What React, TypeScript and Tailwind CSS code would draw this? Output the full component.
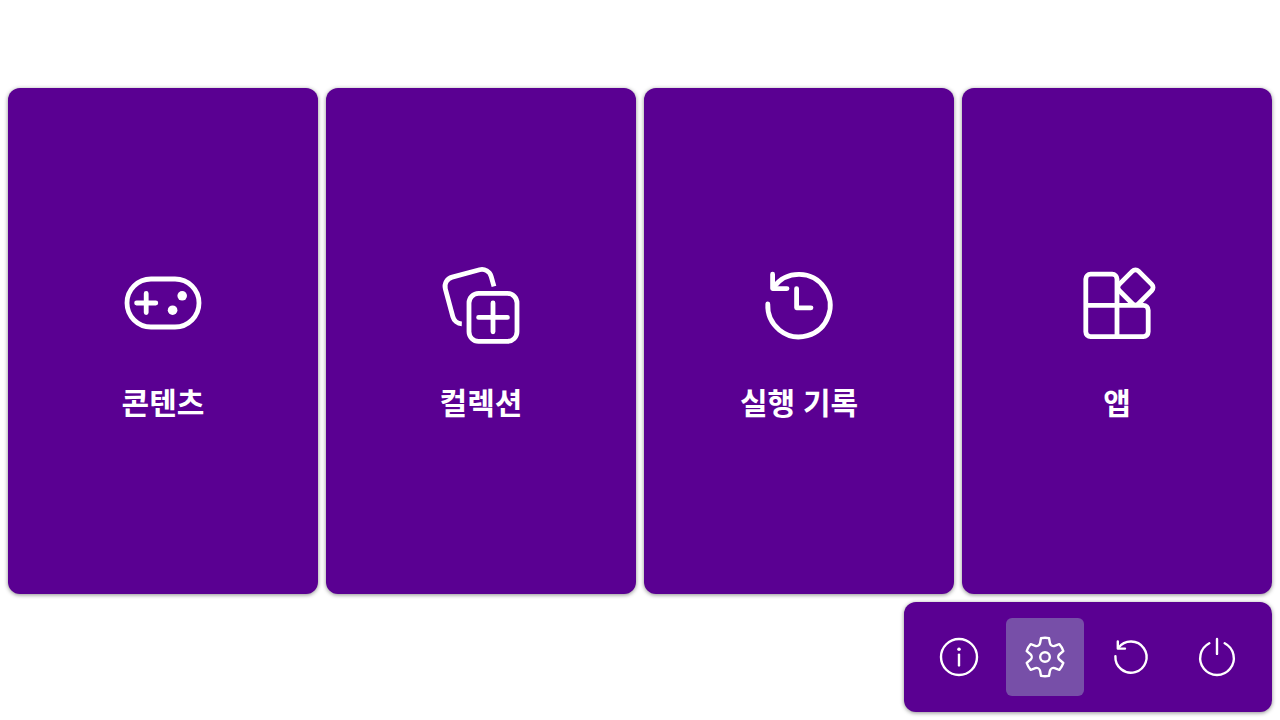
import type { ReactNode } from "react";

type Item = { label: string; icon: ReactNode };

const ControllerIcon = (
  <>
    <rect x="2.5" y="5" width="15" height="10" rx="5" />
    <path d="M6.5 8v4M4.5 10h4" />
    <g fill="currentColor" stroke="none">
      <circle cx="14" cy="8.5" r="1" />
      <circle cx="12" cy="11.5" r="1" />
    </g>
  </>
);

const CollectionIcon = (
  <>
    <rect x="7.5" y="8" width="10" height="10" rx="2" />
    <path d="M12.5 10v6M9.5 13h6" />
    <path
      strokeLinecap="butt"
      d="M12.7 6.55 12.13 4.5A2 2 0 0 0 9.7 3.07L4 4.6A2 2 0 0 0 2.57 7.05L4.13 12.85A2 2 0 0 0 6 14.33"
    />
  </>
);

const HistoryIcon = (
  <>
    <path d="M3.5 10.2A6.5 6.5 0 1 0 4.75 6.7" />
    <path d="M4.5 4v3h3" />
    <path d="M9.5 7v4h3" />
  </>
);

const AppsIcon = (
  <>
    <path d="M10 10.5V5a1 1 0 0 0-1-1H4.5a1 1 0 0 0-1 1v11a1 1 0 0 0 1 1h11a1 1 0 0 0 1-1v-4.5a1 1 0 0 0-1-1H3.5M10 10.5V17" />
    <rect x="11" y="3.9" width="5.7" height="5.7" rx="0.9" transform="rotate(45 13.85 6.75)" />
  </>
);

const InfoIcon = (
  <>
    <circle cx="10" cy="10" r="7.5" />
    <path d="M10 9v4.5" />
    <circle cx="10" cy="6.75" r="0.75" fill="currentColor" stroke="none" />
  </>
);

const SettingsIcon = (
  <path
    fill="currentColor"
    stroke="none"
    d="M1.91 7.38A8.5 8.5 0 0 1 3.7 4.3a.5.5 0 0 1 .54-.13l1.92.68a1 1 0 0 0 1.32-.76l.36-2a.5.5 0 0 1 .4-.4 8.53 8.53 0 0 1 3.55 0c.2.04.35.2.38.4l.37 2a1 1 0 0 0 1.32.76l1.92-.68a.5.5 0 0 1 .54.13 8.5 8.5 0 0 1 1.78 3.08c.06.2 0 .4-.15.54l-1.56 1.32a1 1 0 0 0 0 1.52l1.56 1.32a.5.5 0 0 1 .15.54 8.5 8.5 0 0 1-1.78 3.08.5.5 0 0 1-.54.13l-1.92-.68a1 1 0 0 0-1.32.76l-.37 2a.5.5 0 0 1-.38.4 8.53 8.53 0 0 1-3.56 0 .5.5 0 0 1-.39-.4l-.36-2a1 1 0 0 0-1.32-.76l-1.92.68a.5.5 0 0 1-.54-.13 8.5 8.5 0 0 1-1.78-3.08.5.5 0 0 1 .15-.54l1.56-1.32a1 1 0 0 0 0-1.52L2.06 7.92a.5.5 0 0 1-.15-.54Zm1.06 0 1.3 1.1a2 2 0 0 1 0 3.04l-1.3 1.1c.3.79.72 1.51 1.25 2.16l1.6-.58a2 2 0 0 1 2.63 1.53l.3 1.67a7.56 7.56 0 0 0 2.5 0l.3-1.67a2 2 0 0 1 2.64-1.53l1.6.57a7.5 7.5 0 0 0 1.24-2.15l-1.3-1.1a2 2 0 0 1 0-3.05l1.3-1.09a7.5 7.5 0 0 0-1.25-2.16l-1.6.58a2 2 0 0 1-2.63-1.53l-.3-1.67a7.55 7.55 0 0 0-2.5 0l-.3 1.67A2 2 0 0 1 5.81 5.8l-1.6-.57a7.5 7.5 0 0 0-1.24 2.15ZM7.5 10a2.5 2.5 0 1 1 5 0 2.5 2.5 0 0 1-5 0Zm1 0a1.5 1.5 0 1 0 3 0 1.5 1.5 0 0 0-3 0Z"
  />
);

const RestartIcon = (
  <>
    <path d="M3.5 9.7A6.5 6.5 0 1 0 4.75 6.2" />
    <path d="M4.5 3.5v3h3" />
  </>
);

const PowerIcon = (
  <>
    <path d="M6.8 4.28a7 7 0 1 0 6.4 0" />
    <path d="M10 2.5v6.2" />
  </>
);

const cards: Item[] = [
  { label: "콘텐츠", icon: ControllerIcon },
  { label: "컬렉션", icon: CollectionIcon },
  { label: "실행 기록", icon: HistoryIcon },
  { label: "앱", icon: AppsIcon },
];

const actions: (Item & { active?: boolean })[] = [
  { label: "정보", icon: InfoIcon },
  { label: "설정", icon: SettingsIcon, active: true },
  { label: "다시 시작", icon: RestartIcon },
  { label: "전원", icon: PowerIcon },
];

function Icon({ className, children }: { className: string; children: ReactNode }) {
  return (
    <svg
      viewBox="0 0 20 20"
      className={className}
      fill="none"
      stroke="currentColor"
      strokeWidth="1"
      strokeLinecap="round"
      strokeLinejoin="round"
      aria-hidden="true"
    >
      {children}
    </svg>
  );
}

export default function App() {
  return (
    <div className="flex min-h-screen flex-col gap-2 bg-white p-2 font-['Noto_Sans','Noto_Sans_CJK_KR',sans-serif] text-white">
      <main className="mt-20 grid flex-1 grid-cols-4 gap-2">
        {cards.map(({ label, icon }) => (
          <button
            key={label}
            type="button"
            className="flex flex-col items-center justify-center gap-7 rounded-xl bg-[#5a0092] shadow-[0_1px_4px_rgba(0,0,0,0.45)]"
          >
            <Icon className="size-24">{icon}</Icon>
            <span className="text-[30px] leading-[48px] font-bold">{label}</span>
          </button>
        ))}
      </main>
      <nav className="flex gap-2 self-end rounded-xl bg-[#5a0092] p-4 shadow-[0_1px_4px_rgba(0,0,0,0.45)]">
        {actions.map(({ label, icon, active }) => (
          <button
            key={label}
            type="button"
            aria-label={label}
            className={active ? "rounded-md bg-[#774fa8] p-[15px]" : "rounded-md p-[15px]"}
          >
            <Icon className="size-12">{icon}</Icon>
          </button>
        ))}
      </nav>
    </div>
  );
}
